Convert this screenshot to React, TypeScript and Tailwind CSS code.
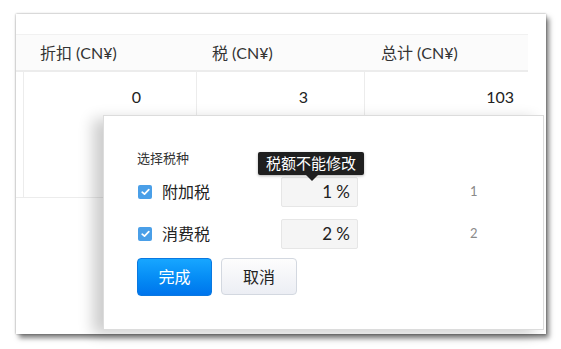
import React from "react";

const font = { fontFamily: "Lato, 'Noto Sans CJK SC', sans-serif" };

function Check() {
  return (
    <div className="w-[14px] h-[14px] rounded-[2px] bg-[#4a9fe8] flex items-center justify-center shrink-0">
      <svg width="9" height="8" viewBox="0 0 9 8">
        <path d="M1.2 4.2 L3.5 6.2 L7.8 1.6" stroke="white" strokeWidth="1.7" fill="none" strokeLinecap="round" strokeLinejoin="round" />
      </svg>
    </div>
  );
}

function TaxRow({ name, pct, idx }: { name: string; pct: string; idx: string }) {
  return (
    <div className="flex items-center h-[30px]">
      <div className="w-[144px] flex items-center pl-[1px]">
        <Check />
        <span className="ml-[10px] text-[16px] text-[#222] leading-none">{name}</span>
      </div>
      <div className="w-[77px] h-[30px] bg-[#f5f5f5] border border-[#e6e6e6] rounded-[2px] flex items-center justify-end pr-[7px] text-[17px] text-[#222]">
        {pct}
      </div>
      <span className="ml-[112px] text-[13px] text-[#8a8a8a]">{idx}</span>
    </div>
  );
}

export default function App() {
  return (
    <div className="w-[561px] h-[349px] bg-white relative overflow-hidden" style={font}>
      <div className="absolute left-[16px] top-[14px] w-[530px] h-[320px] bg-white shadow-[0_0_2px_rgba(0,0,0,0.4),3px_4px_5px_rgba(0,0,0,0.5)]">
        <div className="h-[20px]" />
        <div className="w-[512px] h-[38px] bg-[#fbfbfb] border-t border-[#f1f1f1] border-b-[2px] border-b-[#ececec] flex items-center text-[16px] text-[#333]">
          <span className="ml-[24px] w-[172px]">折扣 (CN¥)</span>
          <span className="w-[169px]">税 (CN¥)</span>
          <span>总计 (CN¥)</span>
        </div>
        <div className="w-[512px] h-[126px] border-b border-[#ececec] flex text-[16px] text-[#222]">
          <div className="ml-[7px] w-[173px] border-l border-[#ececec] flex justify-end pr-[55px] pt-[13px]">0</div>
          <div className="w-[168px] border-l border-[#ececec] flex justify-end pr-[56px] pt-[13px]">3</div>
          <div className="flex-1 border-l border-[#ececec] flex justify-end pr-[14px] pt-[13px]">103</div>
        </div>

        <div className="absolute left-[87px] top-[101px] w-[441px] h-[215px] bg-white border border-[#dcdcdc] shadow-[-10px_4px_14px_rgba(0,0,0,0.2)] pl-[33px] pt-[32px]">
          <div className="text-[13px] leading-[20px] text-[#333]">选择税种</div>
          <div className="mt-[9px]">
            <TaxRow name="附加税" pct="1 %" idx="1" />
          </div>
          <div className="mt-[12px]">
            <TaxRow name="消费税" pct="2 %" idx="2" />
          </div>
          <div className="mt-[9px] flex gap-[9px] items-start">
            <button className="w-[75px] h-[38px] rounded-[4px] bg-gradient-to-b from-[#17a6ff] to-[#0074ec] border border-[#0a78e0] text-white text-[16px]">完成</button>
            <button className="w-[76px] h-[37px] rounded-[4px] bg-gradient-to-b from-[#fdfdfd] to-[#eceef4] border border-[#d3d8e0] text-[#222] text-[16px]">取消</button>
          </div>

          <div className="absolute left-[154px] top-[36px] w-[106px] h-[23px] bg-[#1f1f1f] rounded-[2px] text-white text-[15px] flex items-center justify-center shadow-[0_1px_3px_rgba(0,0,0,0.3)]">
            税额不能修改
          </div>
          <div className="absolute left-[202px] top-[59px] w-0 h-0 border-l-[6px] border-r-[6px] border-t-[6px] border-l-transparent border-r-transparent border-t-[#1f1f1f]" />
        </div>
      </div>
    </div>
  );
}
